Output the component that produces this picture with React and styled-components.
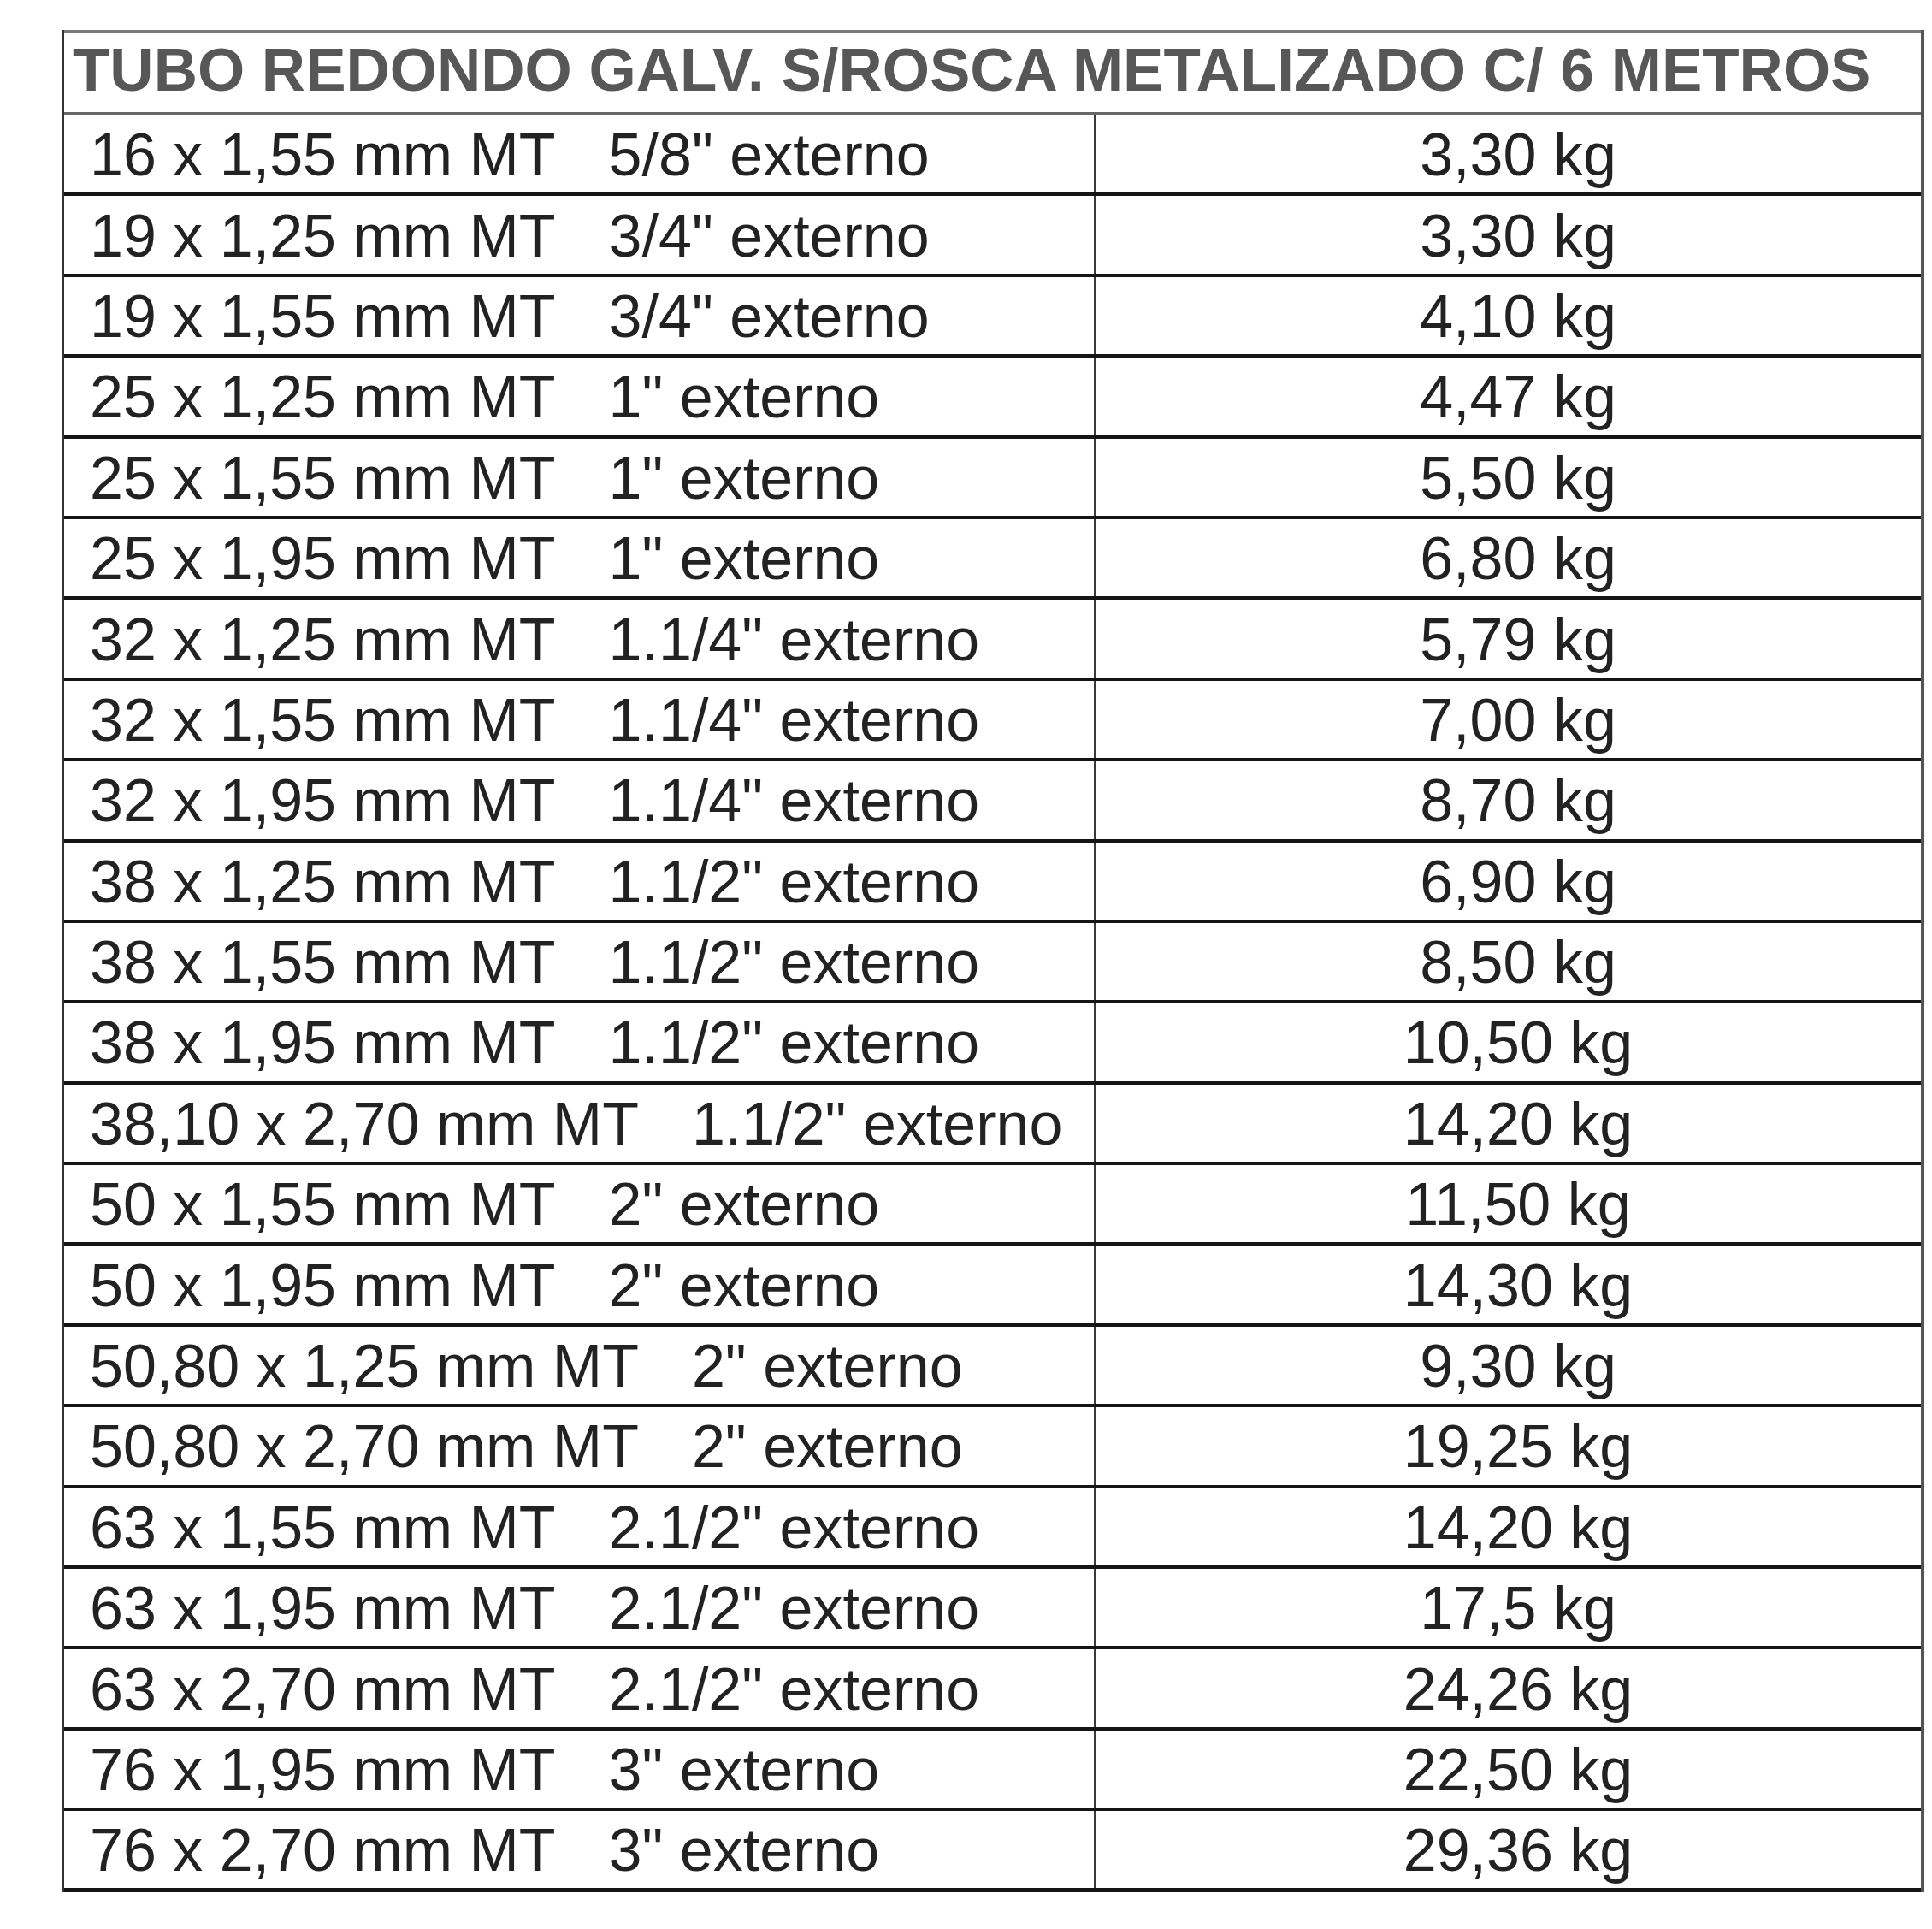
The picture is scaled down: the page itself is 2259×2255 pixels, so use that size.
import React from 'react'
import styled, { createGlobalStyle } from 'styled-components'

const GlobalStyle = createGlobalStyle`
    * {
        box-sizing: border-box;
    }
    body {
        margin: 0;
        background: #ffffff;
        font-family: "Liberation Sans", Arial, sans-serif;
    }
`

const StyledPage = styled.div`
    padding: 35px 0 40px 72px;
`

const StyledTable = styled.div`
    width: 2178px;
    border-left: 3px solid #333;
    border-right: 4px solid #555;
`

const StyledTitle = styled.h1`
    margin: 0;
    height: 100px;
    display: flex;
    align-items: center;
    padding: 0 0 7px 10px;
    border-top: 3px solid #7a7a7a;
    border-bottom: 4px solid #666;
    font-size: 71px;
    font-weight: 700;
    color: #575757;
    white-space: nowrap;
`

const StyledRow = styled.div`
    display: grid;
    grid-template-columns: 1204px 1fr;
    height: 94.4px;
    border-bottom: 4px solid #151515;
    font-size: 70px;
    color: #222;
    &:last-child {
        border-bottom-width: 5px;
    }
`

const StyledSpec = styled.div`
    display: flex;
    align-items: center;
    gap: 62px;
    padding: 2px 0 0 30px;
    white-space: nowrap;
`

const StyledWeight = styled.div`
    display: flex;
    align-items: center;
    justify-content: center;
    padding: 2px 0 0 22px;
    border-left: 3px solid #3a3a3a;
    white-space: nowrap;
`

const tubes = [
    { size: '16 x 1,55 mm MT', nominal: '5/8" externo', weight: '3,30 kg' },
    { size: '19 x 1,25 mm MT', nominal: '3/4" externo', weight: '3,30 kg' },
    { size: '19 x 1,55 mm MT', nominal: '3/4" externo', weight: '4,10 kg' },
    { size: '25 x 1,25 mm MT', nominal: '1" externo', weight: '4,47 kg' },
    { size: '25 x 1,55 mm MT', nominal: '1" externo', weight: '5,50 kg' },
    { size: '25 x 1,95 mm MT', nominal: '1" externo', weight: '6,80 kg' },
    { size: '32 x 1,25 mm MT', nominal: '1.1/4" externo', weight: '5,79 kg' },
    { size: '32 x 1,55 mm MT', nominal: '1.1/4" externo', weight: '7,00 kg' },
    { size: '32 x 1,95 mm MT', nominal: '1.1/4" externo', weight: '8,70 kg' },
    { size: '38 x 1,25 mm MT', nominal: '1.1/2" externo', weight: '6,90 kg' },
    { size: '38 x 1,55 mm MT', nominal: '1.1/2" externo', weight: '8,50 kg' },
    { size: '38 x 1,95 mm MT', nominal: '1.1/2" externo', weight: '10,50 kg' },
    { size: '38,10 x 2,70 mm MT', nominal: '1.1/2" externo', weight: '14,20 kg' },
    { size: '50 x 1,55 mm MT', nominal: '2" externo', weight: '11,50 kg' },
    { size: '50 x 1,95 mm MT', nominal: '2" externo', weight: '14,30 kg' },
    { size: '50,80 x 1,25 mm MT', nominal: '2" externo', weight: '9,30 kg' },
    { size: '50,80 x 2,70 mm MT', nominal: '2" externo', weight: '19,25 kg' },
    { size: '63 x 1,55 mm MT', nominal: '2.1/2" externo', weight: '14,20 kg' },
    { size: '63 x 1,95 mm MT', nominal: '2.1/2" externo', weight: '17,5 kg' },
    { size: '63 x 2,70 mm MT', nominal: '2.1/2" externo', weight: '24,26 kg' },
    { size: '76 x 1,95 mm MT', nominal: '3" externo', weight: '22,50 kg' },
    { size: '76 x 2,70 mm MT', nominal: '3" externo', weight: '29,36 kg' },
]

const App = () => {
    return (
        <StyledPage>
            <GlobalStyle />
            <StyledTable>
                <StyledTitle>TUBO REDONDO GALV. S/ROSCA METALIZADO C/ 6 METROS</StyledTitle>
                {tubes.map((item, index) => (
                    <StyledRow key={index}>
                        <StyledSpec>
                            <span>{item.size}</span>
                            <span>{item.nominal}</span>
                        </StyledSpec>
                        <StyledWeight>{item.weight}</StyledWeight>
                    </StyledRow>
                ))}
            </StyledTable>
        </StyledPage>
    )
}

export default App
